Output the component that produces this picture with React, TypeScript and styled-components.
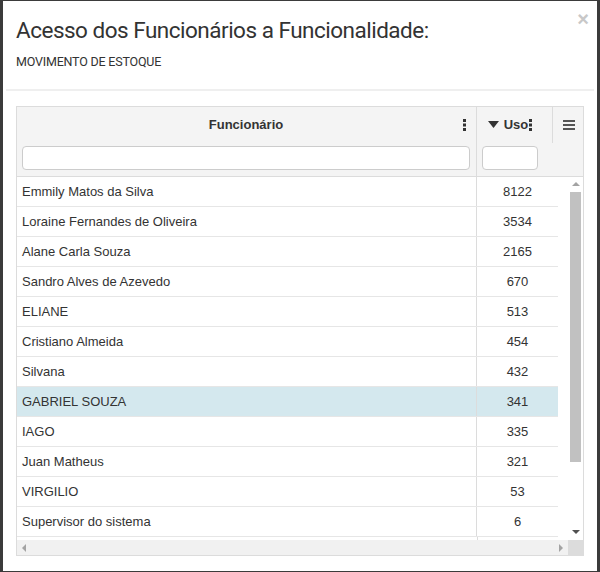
import React from 'react';
import styled, { createGlobalStyle } from 'styled-components';

const funcionarios = [
  { nome: 'Emmily Matos da Silva', uso: 8122 },
  { nome: 'Loraine Fernandes de Oliveira', uso: 3534 },
  { nome: 'Alane Carla Souza', uso: 2165 },
  { nome: 'Sandro Alves de Azevedo', uso: 670 },
  { nome: 'ELIANE', uso: 513 },
  { nome: 'Cristiano Almeida', uso: 454 },
  { nome: 'Silvana', uso: 432 },
  { nome: 'GABRIEL SOUZA', uso: 341 },
  { nome: 'IAGO', uso: 335 },
  { nome: 'Juan Matheus', uso: 321 },
  { nome: 'VIRGILIO', uso: 53 },
  { nome: 'Supervisor do sistema', uso: 6 },
];

const selecionado = 'GABRIEL SOUZA';

const Dots = () => (
  <svg width="3" height="12" viewBox="0 0 3 12">
    <rect x="0" y="0" width="3" height="3" fill="#333" />
    <rect x="0" y="4.5" width="3" height="3" fill="#333" />
    <rect x="0" y="9" width="3" height="3" fill="#333" />
  </svg>
);

export default function App() {
  return (
    <>
      <GlobalStyle />
      <Modal>
        <Close>×</Close>
        <Header>
          <Title>Acesso dos Funcionários a Funcionalidade:</Title>
          <Subtitle>MOVIMENTO DE ESTOQUE</Subtitle>
        </Header>
        <Separator />
        <Body>
          <Grid>
            <GridHeader>
              <HeaderCell $width={460}>
                <HeaderTitle $padRight={6}>Funcionário</HeaderTitle>
                <ColMenu>
                  <Dots />
                </ColMenu>
                <FilterInput $width={448} />
              </HeaderCell>
              <HeaderCell $width={76} $shortDivider>
                <HeaderTitle $padRight={15}>
                  <svg width="11" height="7" viewBox="0 0 11 7" style={{ marginRight: 5 }}>
                    <path d="M0 0 L11 0 L5.5 7 Z" fill="#333" />
                  </svg>
                  Uso
                  <InlineMenu>
                    <Dots />
                  </InlineMenu>
                </HeaderTitle>
                <FilterInput $width={56} />
              </HeaderCell>
              <GridMenu>
                <svg width="12" height="10" viewBox="0 0 12 10">
                  <rect x="0" y="0" width="12" height="2" fill="#555" />
                  <rect x="0" y="4" width="12" height="2" fill="#555" />
                  <rect x="0" y="8" width="12" height="2" fill="#555" />
                </svg>
              </GridMenu>
            </GridHeader>
            <Viewport>
              <Rows>
                {funcionarios.map((f) => (
                  <Row key={f.nome} $selected={f.nome === selecionado}>
                    <NameCell>{f.nome}</NameCell>
                    <UsoCell>{f.uso}</UsoCell>
                  </Row>
                ))}
                <PartialRow />
              </Rows>
              <VScroll>
                <ArrowUp />
                <VThumb />
                <ArrowDown />
              </VScroll>
            </Viewport>
            <HScroll>
              <HTrack>
                <ArrowLeft />
                <ArrowRight />
              </HTrack>
              <Corner />
            </HScroll>
          </Grid>
        </Body>
      </Modal>
    </>
  );
}

const GlobalStyle = createGlobalStyle`
  html, body {
    margin: 0;
    padding: 0;
    background: #3b3b3b;
  }
  body {
    font-family: "Liberation Sans", Arial, sans-serif;
    color: #333;
  }
  * {
    box-sizing: border-box;
  }
`;

const Modal = styled.div`
  position: relative;
  margin: 1px 3px 0 3px;
  height: 570px;
  background: #fff;
  overflow: hidden;
`;

const Close = styled.span`
  position: absolute;
  top: 8px;
  right: 8px;
  font-family: "Liberation Sans", Arial, sans-serif;
  font-size: 20px;
  font-weight: bold;
  line-height: 20px;
  color: #c8c8c8;
`;

const Header = styled.div`
  padding: 16px 13px 0 13px;
  height: 88px;
`;

const Title = styled.h4`
  margin: 0;
  font-family: Roboto, "Open Sans", sans-serif;
  font-weight: 400;
  font-size: 22.5px;
  letter-spacing: -0.5px;
  line-height: 27px;
  color: #333;
`;

const Subtitle = styled.div`
  margin-top: 10px;
  font-family: Roboto, "Open Sans", sans-serif;
  font-size: 12.5px;
  letter-spacing: -0.2px;
  line-height: 16px;
  color: #333;
`;

const Separator = styled.div`
  margin: 0 3px;
  height: 2px;
  background: #efefef;
`;

const Body = styled.div`
  padding: 15px 13px 0 13px;
`;

const Grid = styled.div`
  border: 1px solid #dcdcdc;
  height: 450px;
  display: flex;
  flex-direction: column;
  overflow: hidden;
`;

const GridHeader = styled.div`
  display: flex;
  height: 70px;
  background: #f4f4f4;
  border-bottom: 1px solid #dcdcdc;
  flex-shrink: 0;
`;

const HeaderCell = styled.div<{ $width: number; $shortDivider?: boolean }>`
  position: relative;
  width: ${(p) => p.$width}px;
  display: flex;
  flex-direction: column;
  padding: 0 0 0 5px;
  border-right: ${(p) => (p.$shortDivider ? 'none' : '1px solid #dcdcdc')};

  ${(p) =>
    p.$shortDivider &&
    `
    &::after {
      content: '';
      position: absolute;
      right: 0;
      top: 0;
      height: 36px;
      width: 1px;
      background: #dcdcdc;
    }
  `}
`;

const HeaderTitle = styled.div<{ $padRight: number }>`
  height: 35px;
  display: flex;
  align-items: center;
  justify-content: center;
  font-size: 13px;
  font-weight: bold;
  color: #333;
  padding-right: ${(p) => p.$padRight}px;
`;

const ColMenu = styled.span`
  position: absolute;
  top: 0;
  right: 10px;
  height: 35px;
  display: flex;
  align-items: center;
`;

const InlineMenu = styled.span`
  display: flex;
  align-items: center;
  margin-left: 1px;
`;

const FilterInput = styled.input<{ $width: number }>`
  width: ${(p) => p.$width}px;
  height: 24px;
  border: 1px solid #ccc;
  border-radius: 4px;
  background: #fff;
  padding: 0 6px;
  margin-top: 4px;
  font-size: 13px;
`;

const GridMenu = styled.div`
  flex: 1;
  display: flex;
  justify-content: center;
  padding-top: 13px;
  padding-left: 2px;
`;

const Viewport = styled.div`
  display: flex;
  height: 363px;
  overflow: hidden;
  flex-shrink: 0;
`;

const Rows = styled.div`
  width: 541px;
  flex-shrink: 0;
`;

const Row = styled.div<{ $selected: boolean }>`
  display: flex;
  height: 30px;
  border-bottom: 1px solid #e6e6e6;
  background: ${(p) => (p.$selected ? '#d4e8ee' : '#fff')};
  font-size: 13px;
  line-height: 29px;
  color: #333;
`;

const PartialRow = styled.div`
  height: 4px;
  margin-left: 460px;
  border-left: 1px solid #dcdcdc;
`;

const NameCell = styled.div`
  width: 460px;
  padding-left: 5px;
  border-right: 1px solid #dcdcdc;
  white-space: nowrap;
  overflow: hidden;
`;

const UsoCell = styled.div`
  flex: 1;
  text-align: center;
`;

const VScroll = styled.div`
  margin-left: auto;
  width: 15px;
  position: relative;
  background: #fff;
`;

const ArrowUp = styled.div`
  position: absolute;
  top: 5px;
  left: 4px;
  width: 0;
  height: 0;
  border-left: 4px solid transparent;
  border-right: 4px solid transparent;
  border-bottom: 4px solid #a3a3a3;
`;

const ArrowDown = styled.div`
  position: absolute;
  bottom: 6px;
  left: 4px;
  width: 0;
  height: 0;
  border-left: 4px solid transparent;
  border-right: 4px solid transparent;
  border-top: 4px solid #505050;
`;

const VThumb = styled.div`
  position: absolute;
  top: 15px;
  left: 2px;
  width: 11px;
  height: 270px;
  background: #c1c1c1;
`;

const HScroll = styled.div`
  display: flex;
  height: 15px;
  flex-shrink: 0;
`;

const HTrack = styled.div`
  position: relative;
  flex: 1;
  background: #f1f1f1;
`;

const ArrowLeft = styled.div`
  position: absolute;
  left: 5px;
  top: 4px;
  width: 0;
  height: 0;
  border-top: 4px solid transparent;
  border-bottom: 4px solid transparent;
  border-right: 4px solid #a3a3a3;
`;

const ArrowRight = styled.div`
  position: absolute;
  right: 5px;
  top: 4px;
  width: 0;
  height: 0;
  border-top: 4px solid transparent;
  border-bottom: 4px solid transparent;
  border-left: 4px solid #a3a3a3;
`;

const Corner = styled.div`
  width: 15px;
  background: #dcdcdc;
`;
